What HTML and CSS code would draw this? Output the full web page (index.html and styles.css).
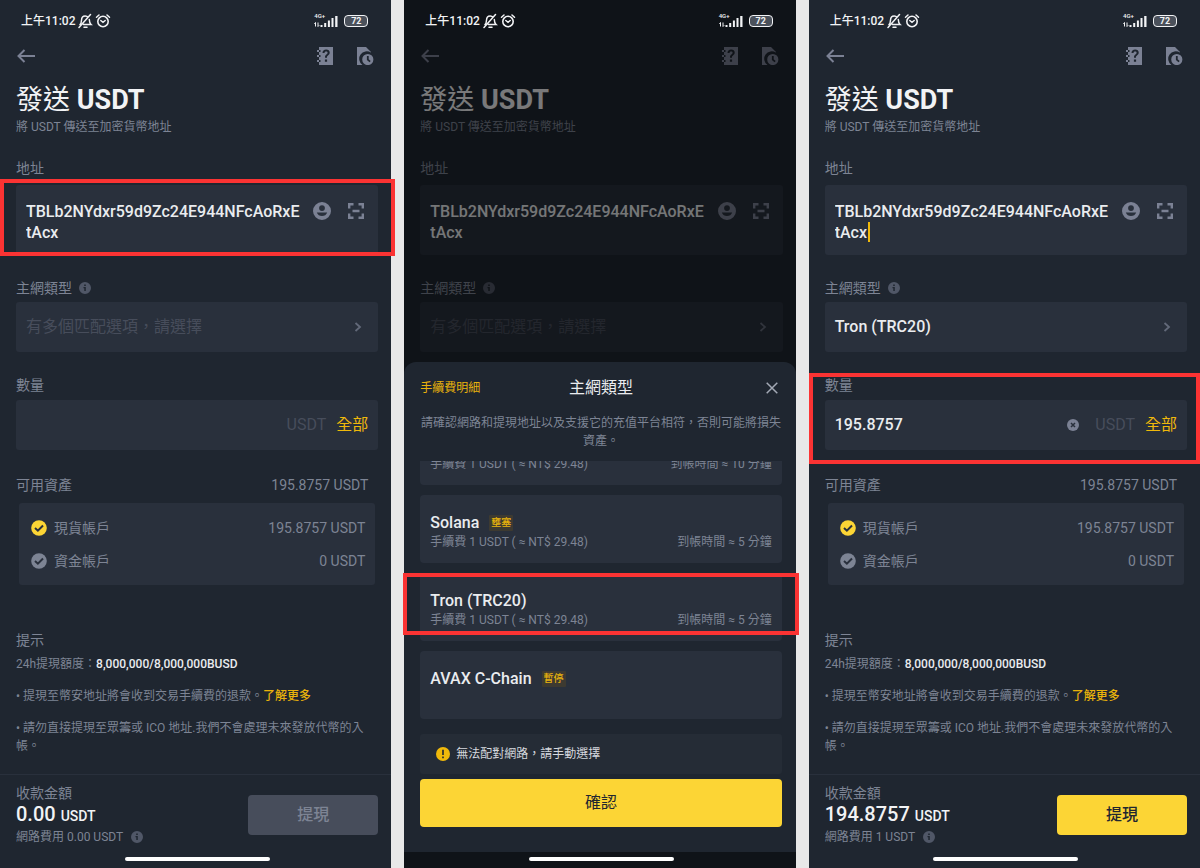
FILE: index.html
```html
<!DOCTYPE html>
<html lang="zh-Hant">
<head>
    <meta charset="UTF-8">
    <meta name="viewport" content="width=device-width, initial-scale=1.0">
    <title>發送 USDT</title>
    <link rel="stylesheet" href="styles.css">
</head>
<body>
    <!-- shared icons -->
    <svg class="sprite" aria-hidden="true">
        <symbol id="i-bell" viewBox="0 0 16 16">
            <path d="M3 11.500c1.200-1 1.400-2.200 1.500-4.300C4.600 4.600 6 3 8.200 3c1.300 0 2.200.5 2.900 1.300M12.300 6.500c.1 2.500.3 3.800 1.700 5H6.500M7 14.200h3M2 14.500 13.500 1.500" fill="none" stroke="currentColor" stroke-width="1.500" stroke-linecap="round"/>
        </symbol>
        <symbol id="i-alarm" viewBox="0 0 16 16">
            <circle cx="8" cy="8.500" r="5.200" fill="none" stroke="currentColor" stroke-width="1.600"/>
            <path d="M5.800 7.500 8 9.300l2.200-1.800M1.500 4.200 4 2M14.500 4.200 12 2" fill="none" stroke="currentColor" stroke-width="1.500" stroke-linecap="round"/>
        </symbol>
        <symbol id="i-bars" viewBox="0 0 24 14">
            <path d="M1.500 8.500v4M.3 9.700l1.200-1.200M4 8.500v4l1.200-1.200" fill="none" stroke="currentColor" stroke-width="1"/>
            <path d="M6.500 11h2v2h-2zM10.200 9h2v4h-2zM13.900 6.500h2V13h-2zM17.500 4h2v9h-2zM21.200 2h2.300v11h-2.300z" fill="currentColor"/>
        </symbol>
        <symbol id="i-back" viewBox="0 0 18 14">
            <path d="M7.500 1 1.500 7l6 6M1.500 7H18" fill="none" stroke="currentColor" stroke-width="2"/>
        </symbol>
        <symbol id="i-help" viewBox="0 0 16 18">
            <path fill="currentColor" fill-rule="evenodd" d="M2 0h14v18H2v-3H0v-2h2v-3H0V8h2V5H0V3h2zM5.500 6h2c0-1 .6-1.600 1.600-1.600s1.500.5 1.500 1.300c0 .7-.4 1.100-1.200 1.700C8.400 8.200 8 8.900 8 10v.8h2V10c0-.6.200-.9 1-1.500 1.100-.8 1.700-1.600 1.700-2.900 0-1.900-1.400-3.100-3.500-3.100-2.300 0-3.700 1.300-3.700 3.500zM7.900 12.500v2.300h2.200v-2.300zM2 3v2h1.500V3zM2 8v2h1.500V8zM2 13v2h1.500v-2z"/>
        </symbol>
        <symbol id="i-history" viewBox="0 0 17 18">
            <path fill="currentColor" d="M0 0h9l5 5v.6A6.800 6.800 0 0 0 5.500 18H0z"/>
            <path fill="currentColor" fill-rule="evenodd" d="M10.800 6.900a5.600 5.600 0 1 1 0 11.200 5.600 5.600 0 0 1 0-11.200zM9.900 9v4.100l2.600 2.200 1.200-1.300-2-1.700V9z"/>
        </symbol>
        <symbol id="i-user" viewBox="0 0 18 18">
            <path fill="currentColor" fill-rule="evenodd" d="M9 0a9 9 0 1 1 0 18A9 9 0 0 1 9 0zm0 3.200a2.900 2.900 0 1 0 0 5.800 2.900 2.900 0 0 0 0-5.800zM3.800 10.500a5.600 5.600 0 0 0 10.400 0z"/>
        </symbol>
        <symbol id="i-scan" viewBox="0 0 16 16">
            <path d="M1.200 5.500V1.200h4.300M10.500 1.200h4.300v4.300M14.800 10.500v4.300h-4.300M5.500 14.800H1.200v-4.300M4.500 8h7" fill="none" stroke="currentColor" stroke-width="2.400"/>
        </symbol>
        <symbol id="i-info" viewBox="0 0 12 12">
            <path fill="currentColor" fill-rule="evenodd" d="M6 0a6 6 0 1 1 0 12A6 6 0 0 1 6 0zM5.200 2.500V4h1.600V2.500zM4.500 5v1.200h.8V9h1.500V5z"/>
        </symbol>
        <symbol id="i-next" viewBox="0 0 8 10">
            <path d="M1.500 1 6 5 1.500 9" fill="none" stroke="currentColor" stroke-width="1.800"/>
        </symbol>
        <symbol id="i-check" viewBox="0 0 16 16">
            <circle cx="8" cy="8" r="7.800" fill="currentColor"/>
            <path d="m4 8 2.900 2.700L12 5.500" fill="none" stroke="#29303c" stroke-width="2"/>
        </symbol>
        <symbol id="i-clear" viewBox="0 0 12 12">
            <circle cx="6" cy="6" r="6" fill="currentColor"/>
            <path d="m4 4 4 4M8 4 4 8" stroke="#29303c" stroke-width="1.500"/>
        </symbol>
        <symbol id="i-close" viewBox="0 0 12 12">
            <path d="m.7.7 10.600 10.600M11.300.7.7 11.300" stroke="currentColor" stroke-width="1.500"/>
        </symbol>
        <symbol id="i-warn" viewBox="0 0 14 14">
            <circle cx="7" cy="7" r="7" fill="currentColor"/>
            <path d="M7 2.800v5.200M7 9.500v1.700" stroke="#1f2630" stroke-width="1.600"/>
        </symbol>
    </svg>

    <main class="board">
        <!-- step 1: address -->
        <section class="phone">
            <div class="status">
                <span class="time">上午11:02</span>
                <svg class="icon-16"><use href="#i-bell"/></svg>
                <svg class="icon-16"><use href="#i-alarm"/></svg>
                <span class="signal"><span class="net">4G+</span><svg class="bars"><use href="#i-bars"/></svg></span>
                <span class="battery">72</span>
            </div>
            <header class="topbar">
                <button class="icon-btn" aria-label="返回"><svg class="back"><use href="#i-back"/></svg></button>
                <button class="icon-btn push" aria-label="說明"><svg class="help"><use href="#i-help"/></svg></button>
                <button class="icon-btn" aria-label="紀錄"><svg class="history"><use href="#i-history"/></svg></button>
            </header>
            <h1>發送 <b>USDT</b></h1>
            <p class="subtitle">將 USDT 傳送至加密貨幣地址</p>

            <label class="label" for="addr1">地址</label>
            <div class="field field-address">
                <textarea id="addr1" rows="2" spellcheck="false">TBLb2NYdxr59d9Zc24E944NFcAoRxEtAcx</textarea>
                <button class="icon-btn" aria-label="聯絡人"><svg class="user"><use href="#i-user"/></svg></button>
                <button class="icon-btn scan" aria-label="掃描"><svg class="icon-16"><use href="#i-scan"/></svg></button>
                <div class="mark mark-address"></div>
            </div>

            <div class="label label-info"><span id="net1">主網類型</span> <svg class="icon-12"><use href="#i-info"/></svg></div>
            <button class="field field-select empty" aria-labelledby="net1 netv1">
                <span id="netv1">有多個匹配選項，請選擇</span>
                <svg class="next"><use href="#i-next"/></svg>
            </button>

            <div class="amount">
                <label class="label" for="amt1">數量</label>
                <div class="field">
                    <input type="text" id="amt1" inputmode="decimal">
                    <span class="unit">USDT</span>
                    <button class="all">全部</button>
                </div>
            </div>

            <div class="available"><span>可用資產</span><span>195.8757 USDT</span></div>
            <ul class="accounts">
                <li><svg class="icon-16 on"><use href="#i-check"/></svg>現貨帳戶 <span>195.8757 USDT</span></li>
                <li><svg class="icon-16"><use href="#i-check"/></svg>資金帳戶 <span>0 USDT</span></li>
            </ul>

            <div class="tips">
                <h2>提示</h2>
                <p>24h提現額度：<strong>8,000,000/8,000,000BUSD</strong></p>
                <p>• 提現至幣安地址將會收到交易手續費的退款。<a href="#">了解更多</a></p>
                <p>• 請勿直接提現至眾籌或 ICO 地址.我們不會處理未來發放代幣的入帳。</p>
            </div>

            <footer class="summary">
                <div>
                    <div class="receive">收款金額</div>
                    <div class="total">0.00 <small>USDT</small></div>
                    <div class="fee">網路費用 0.00 USDT <svg class="icon-12"><use href="#i-info"/></svg></div>
                </div>
                <button class="submit" disabled>提現</button>
            </footer>
            <div class="home"></div>
        </section>

        <!-- step 2: network sheet -->
        <section class="phone">
            <div class="status">
                <span class="time">上午11:02</span>
                <svg class="icon-16"><use href="#i-bell"/></svg>
                <svg class="icon-16"><use href="#i-alarm"/></svg>
                <span class="signal"><span class="net">4G+</span><svg class="bars"><use href="#i-bars"/></svg></span>
                <span class="battery">72</span>
            </div>
            <header class="topbar">
                <button class="icon-btn" aria-label="返回"><svg class="back"><use href="#i-back"/></svg></button>
                <button class="icon-btn push" aria-label="說明"><svg class="help"><use href="#i-help"/></svg></button>
                <button class="icon-btn" aria-label="紀錄"><svg class="history"><use href="#i-history"/></svg></button>
            </header>
            <h1>發送 <b>USDT</b></h1>
            <p class="subtitle">將 USDT 傳送至加密貨幣地址</p>

            <label class="label" for="addr2">地址</label>
            <div class="field field-address">
                <textarea id="addr2" rows="2" spellcheck="false">TBLb2NYdxr59d9Zc24E944NFcAoRxEtAcx</textarea>
                <button class="icon-btn" aria-label="聯絡人"><svg class="user"><use href="#i-user"/></svg></button>
                <button class="icon-btn scan" aria-label="掃描"><svg class="icon-16"><use href="#i-scan"/></svg></button>
            </div>

            <div class="label label-info"><span id="net2">主網類型</span> <svg class="icon-12"><use href="#i-info"/></svg></div>
            <button class="field field-select empty" aria-labelledby="net2 netv2">
                <span id="netv2">有多個匹配選項，請選擇</span>
                <svg class="next"><use href="#i-next"/></svg>
            </button>

            <div class="scrim"></div>
            <div class="sheet" role="dialog" aria-labelledby="sheet-title">
                <div class="sheet-head">
                    <a href="#">手續費明細</a>
                    <h2 id="sheet-title">主網類型</h2>
                    <button class="icon-btn" aria-label="關閉"><svg class="icon-12"><use href="#i-close"/></svg></button>
                </div>
                <p class="sheet-note">請確認網路和提現地址以及支援它的充值平台相符，否則可能將損失資產。</p>
                <div class="networks-clip">
                    <ul class="networks">
                        <li>
                            <div class="detail"><span>手續費 1 USDT ( ≈ NT$ 29.48)</span><span>到帳時間 ≈ 10 分鐘</span></div>
                        </li>
                        <li>
                            <div class="name">Solana <span class="tag">壅塞</span></div>
                            <div class="detail"><span>手續費 1 USDT ( ≈ NT$ 29.48)</span><span>到帳時間 ≈ 5 分鐘</span></div>
                        </li>
                        <li>
                            <div class="name">Tron (TRC20)</div>
                            <div class="detail"><span>手續費 1 USDT ( ≈ NT$ 29.48)</span><span>到帳時間 ≈ 5 分鐘</span></div>
                            <div class="mark mark-network"></div>
                        </li>
                        <li>
                            <div class="name">AVAX C-Chain <span class="tag">暫停</span></div>
                        </li>
                    </ul>
                </div>
                <p class="alert"><svg class="warn"><use href="#i-warn"/></svg>無法配對網路，請手動選擇</p>
                <button class="confirm">確認</button>
            </div>
            <div class="home"></div>
        </section>

        <!-- step 3: amount -->
        <section class="phone">
            <div class="status">
                <span class="time">上午11:02</span>
                <svg class="icon-16"><use href="#i-bell"/></svg>
                <svg class="icon-16"><use href="#i-alarm"/></svg>
                <span class="signal"><span class="net">4G+</span><svg class="bars"><use href="#i-bars"/></svg></span>
                <span class="battery">72</span>
            </div>
            <header class="topbar">
                <button class="icon-btn" aria-label="返回"><svg class="back"><use href="#i-back"/></svg></button>
                <button class="icon-btn push" aria-label="說明"><svg class="help"><use href="#i-help"/></svg></button>
                <button class="icon-btn" aria-label="紀錄"><svg class="history"><use href="#i-history"/></svg></button>
            </header>
            <h1>發送 <b>USDT</b></h1>
            <p class="subtitle">將 USDT 傳送至加密貨幣地址</p>

            <label class="label" for="addr3">地址</label>
            <div class="field field-address">
                <textarea id="addr3" rows="2" spellcheck="false">TBLb2NYdxr59d9Zc24E944NFcAoRxEtAcx</textarea>
                <span class="caret"></span>
                <button class="icon-btn" aria-label="聯絡人"><svg class="user"><use href="#i-user"/></svg></button>
                <button class="icon-btn scan" aria-label="掃描"><svg class="icon-16"><use href="#i-scan"/></svg></button>
            </div>

            <div class="label label-info"><span id="net3">主網類型</span> <svg class="icon-12"><use href="#i-info"/></svg></div>
            <button class="field field-select" aria-labelledby="net3 netv3">
                <span id="netv3">Tron (TRC20)</span>
                <svg class="next"><use href="#i-next"/></svg>
            </button>

            <div class="amount">
                <label class="label" for="amt3">數量</label>
                <div class="field">
                    <input type="text" id="amt3" inputmode="decimal" value="195.8757">
                    <button class="icon-btn" aria-label="清除"><svg class="icon-12"><use href="#i-clear"/></svg></button>
                    <span class="unit">USDT</span>
                    <button class="all">全部</button>
                </div>
                <div class="mark mark-amount"></div>
            </div>

            <div class="available"><span>可用資產</span><span>195.8757 USDT</span></div>
            <ul class="accounts">
                <li><svg class="icon-16 on"><use href="#i-check"/></svg>現貨帳戶 <span>195.8757 USDT</span></li>
                <li><svg class="icon-16"><use href="#i-check"/></svg>資金帳戶 <span>0 USDT</span></li>
            </ul>

            <div class="tips">
                <h2>提示</h2>
                <p>24h提現額度：<strong>8,000,000/8,000,000BUSD</strong></p>
                <p>• 提現至幣安地址將會收到交易手續費的退款。<a href="#">了解更多</a></p>
                <p>• 請勿直接提現至眾籌或 ICO 地址.我們不會處理未來發放代幣的入帳。</p>
            </div>

            <footer class="summary">
                <div>
                    <div class="receive">收款金額</div>
                    <div class="total">194.8757 <small>USDT</small></div>
                    <div class="fee">網路費用 1 USDT <svg class="icon-12"><use href="#i-info"/></svg></div>
                </div>
                <button class="submit">提現</button>
            </footer>
            <div class="home"></div>
        </section>
    </main>
</body>
</html>
```

FILE: styles.css
```css
* {
    box-sizing: border-box;
}
body {
    margin: 0;
    background: #e8e8e8;
    color: #7d8494;
    font-family: Roboto, "Noto Sans CJK TC", sans-serif;
    font-size: 14px;
    line-height: 18px;
}
h1, h2, p, ul {
    margin: 0;
    padding: 0;
    font-weight: normal;
    list-style: none;
}
button, input, textarea {
    margin: 0;
    padding: 0;
    border: 0;
    background: none;
    color: inherit;
    font: inherit;
}
a {
    color: #e9b30c;
    text-decoration: none;
}
svg {
    flex: none;
}
.sprite {
    display: none;
}
.icon-16 {
    width: 16px;
    height: 16px;
}
.icon-12 {
    width: 12px;
    height: 12px;
}

.board {
    display: grid;
    grid-template-columns: repeat(3, minmax(0, 1fr));
    gap: 13px;
    min-height: 100vh;
    overflow: hidden;
}
.phone {
    position: relative;
    display: flex;
    flex-direction: column;
    padding: 12px 13px 7px 16px;
    background: #1f2630;
}

/* status bar */
.status {
    position: relative;
    z-index: 2;
    display: flex;
    align-items: center;
    gap: 2px;
    padding: 0 10px 0 5px;
    color: #f2f3f5;
}
.time {
    font-size: 12px;
    font-weight: 500;
}
.signal {
    position: relative;
    display: flex;
    margin-left: auto;
}
.net {
    position: absolute;
    left: 0;
    top: -1px;
    font-size: 6px;
    font-weight: 500;
    line-height: 6px;
}
.bars {
    width: 24px;
    height: 14px;
}
.battery {
    margin-left: 4px;
    width: 24px;
    border: 1px solid #f2f3f5;
    border-radius: 4px;
    background: #4b515b;
    font-size: 9px;
    font-weight: 700;
    line-height: 10px;
    text-align: center;
}

/* header */
.topbar {
    display: flex;
    align-items: center;
    gap: 24px;
    height: 52px;
    padding: 0 4px 0 1px;
}
.icon-btn {
    display: flex;
    color: #7b8194;
}
.push {
    margin-left: auto;
}
.back {
    width: 18px;
    height: 14px;
}
.help {
    width: 16px;
    height: 18px;
}
.history {
    width: 17px;
    height: 18px;
}
h1 {
    color: #f2f3f5;
    font-size: 27px;
    line-height: 36px;
}
h1 b {
    font-weight: 700;
}
.subtitle {
    font-size: 12px;
}

/* form */
.label {
    display: block;
    margin: 23px 0 8px;
}
.field {
    position: relative;
    display: flex;
    align-items: center;
    width: 100%;
    height: 50px;
    padding: 0 10px;
    border-radius: 3px;
    background: #29303c;
    color: #eaecef;
    font-size: 16px;
    font-weight: 500;
    text-align: left;
}
.field-address {
    align-items: flex-start;
    gap: 12px;
    height: auto;
    padding: 16px 14px 12px 10px;
}
.field-address .icon-btn {
    height: 20px;
    align-items: center;
}
.field-address .scan {
    margin-left: 5px;
}
.field-address textarea {
    flex: 1;
    min-width: 0;
    resize: none;
    overflow: hidden;
    line-height: 21px;
    word-break: break-all;
}
.user {
    width: 18px;
    height: 18px;
}
.caret {
    position: absolute;
    left: 43px;
    bottom: 13px;
    width: 2px;
    height: 20px;
    background: #f0b90b;
}
.label-info {
    display: flex;
    align-items: center;
    gap: 7px;
    margin: 24px 0 5px;
}
.label-info .icon-12, .fee .icon-12 {
    color: #505767;
}
.field-select {
    justify-content: space-between;
    padding: 0 16px 0 10px;
}
.empty {
    color: #474d5b;
    font-weight: 400;
}
.next {
    width: 8px;
    height: 10px;
    color: #626979;
}
.amount {
    position: relative;
    margin-top: 24px;
}
.amount .label {
    margin: 0 0 6px;
}
.amount input {
    flex: 1;
    min-width: 0;
}
.unit {
    margin: 0 10px 0 16px;
    color: #474d5b;
    font-weight: 400;
}
.all {
    color: #f0b90b;
    font-weight: 400;
}

/* assets */
.available {
    display: flex;
    justify-content: space-between;
    margin-top: 26px;
    padding-right: 10px;
}
.accounts {
    margin: 9px 3px 0;
    padding: 8px 10px 8px 12px;
    border-radius: 3px;
    background: #29303c;
}
.accounts li {
    display: flex;
    align-items: center;
    gap: 7px;
    height: 33px;
}
.accounts span {
    margin-left: auto;
}
.on {
    color: #fcd535;
}
.tips {
    margin-top: 46px;
    font-size: 12px;
}
.tips h2 {
    margin-bottom: 6px;
    font-size: 14px;
}
.tips p {
    margin-bottom: 14px;
}
.tips strong {
    color: #eaecef;
    font-weight: 500;
}
.tips a {
    font-weight: 500;
}

/* footer */
.summary {
    display: flex;
    align-items: center;
    justify-content: space-between;
    margin: auto -13px 11px -16px;
    padding: 9px 13px 0 16px;
    border-top: 1px solid #29303c;
}
.total {
    color: #f2f3f5;
    font-size: 20px;
    font-weight: 500;
    line-height: 24px;
}
.total small {
    font-size: 14px;
}
.fee {
    display: flex;
    align-items: center;
    gap: 8px;
    font-size: 12px;
}
.submit {
    width: 130px;
    height: 40px;
    border-radius: 4px;
    background: #fcd535;
    color: #1f2630;
    font-size: 16px;
    font-weight: 500;
}
.submit:disabled {
    background: #474d5b;
    color: #7d8494;
}
.home {
    position: relative;
    z-index: 2;
    align-self: center;
    width: 145px;
    height: 4px;
    margin-top: auto;
    border-radius: 2px;
    background: #fff;
}
.summary + .home {
    margin-top: 0;
}

/* bottom sheet */
.scrim {
    position: absolute;
    inset: 0;
    background: rgba(0, 0, 0, 0.5);
}
.sheet {
    position: absolute;
    left: 0;
    right: 0;
    bottom: 16px;
    padding: 16px 14px 25px 16px;
    border-radius: 12px 12px 0 0;
    background: #1f2630;
    font-size: 12px;
}
.sheet-head {
    display: grid;
    grid-template-columns: 1fr auto 1fr;
    align-items: center;
}
.sheet-head h2 {
    color: #eaecef;
    font-size: 16px;
}
.sheet-head .icon-btn {
    justify-self: end;
    padding: 4px;
    color: #a3a9b5;
}
.sheet-note {
    margin: 16px 0 11px;
    text-align: center;
}
.networks-clip {
    display: flex;
    flex-direction: column;
    justify-content: flex-end;
    height: 258px;
    margin: 0 -17px 0 -18px;
    padding: 0 17px 0 18px;
    overflow: hidden;
}
.networks {
    display: flex;
    flex-direction: column;
    gap: 10px;
}
.networks li {
    position: relative;
    height: 68px;
    padding: 18px 10px 0;
    border-radius: 4px;
    background: #29303c;
}
.networks li:first-child {
    padding-top: 38px;
}
.name {
    display: flex;
    align-items: center;
    gap: 10px;
    height: 20px;
    color: #eaecef;
    font-size: 16px;
    font-weight: 500;
}
.tag {
    padding: 0 2px;
    border-radius: 1px;
    background: #3d3a31;
    color: #e9b30c;
    font-size: 10px;
    line-height: 16px;
}
.detail {
    display: flex;
    justify-content: space-between;
}
.alert {
    display: flex;
    align-items: center;
    gap: 6px;
    height: 40px;
    margin: 15px 0 5px;
    padding: 0 16px;
    border-radius: 3px;
    background: #252c36;
    color: #d5d8de;
}
.warn {
    width: 14px;
    height: 14px;
    color: #f0b90b;
}
.confirm {
    width: 100%;
    height: 48px;
    border-radius: 4px;
    background: #fcd535;
    color: #1f2630;
    font-size: 16px;
}

/* highlight frames */
.mark {
    position: absolute;
    border: 4px solid #fb3333;
    pointer-events: none;
}
.mark-address {
    inset: -6px -17px -1px -16px;
}
.mark-amount {
    inset: -3px -13px -14px -16px;
}
.mark-network {
    inset: 0 -17px 6px -17px;
}
```
